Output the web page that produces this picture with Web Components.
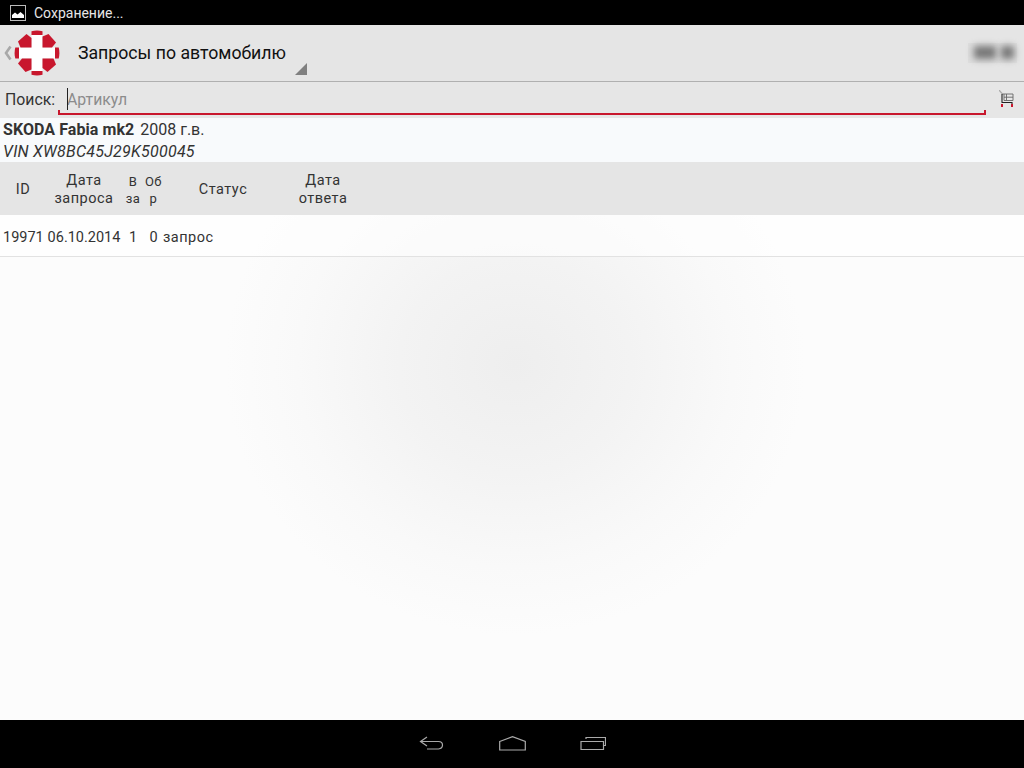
<!DOCTYPE html>
<html>
<head>
<meta charset="utf-8">
<style>
  html, body { margin: 0; height: 100%; }
  body { font-family: Roboto, "Liberation Sans", sans-serif; }
  app-screen { height: 768px; }
</style>
</head>
<body>
<app-screen>
  <status-bar>Сохранение...</status-bar>
  <action-bar>Запросы по автомобилю</action-bar>
  <search-row></search-row>
  <car-info model="SKODA Fabia mk2" year="2008 г.в." vin="VIN XW8BC45J29K500045"></car-info>
  <request-table></request-table>
  <nav-bar></nav-bar>
</app-screen>
<script>
class AppScreen extends HTMLElement {
  constructor() {
    super();
    this.attachShadow({ mode: 'open' });
    this.shadowRoot.innerHTML = `
      <style>
        :host {
          display: flex;
          flex-direction: column;
          width: 1024px;
          overflow: hidden;
          background:
            radial-gradient(ellipse 290px 270px at 515px 365px, #eeeeee 0%, #f3f3f3 40%, #f9f9f9 75%, rgba(252,252,252,0) 100%),
            #fcfcfc;
        }
      </style>
      <slot></slot>`;
  }
}

class StatusBar extends HTMLElement {
  constructor() {
    super();
    this.attachShadow({ mode: 'open' });
    this.shadowRoot.innerHTML = `
      <style>
        :host {
          display: flex;
          align-items: center;
          flex: 0 0 25px;
          padding-left: 10px;
          gap: 8px;
          background: #000;
          color: #e6e6e6;
          font-size: 14px;
        }
        svg { display: block; }
      </style>
      <svg width="16" height="16" viewBox="0 0 16 16">
        <rect x=".5" y=".5" width="15" height="15" fill="none" stroke="#bbb"/>
        <path d="M2 13V10L5 7.5 7.5 9.5 10.5 7 14 10V13Z" fill="#fff"/>
      </svg>
      <slot></slot>`;
  }
}

class ActionBar extends HTMLElement {
  constructor() {
    super();
    this.attachShadow({ mode: 'open' });
    this.shadowRoot.innerHTML = `
      <style>
        :host {
          display: flex;
          align-items: center;
          flex: 0 0 57px;
          box-sizing: border-box;
          border-bottom: 1px solid #b0b0b0;
          background: #e5e5e5;
          color: #111;
          font-size: 17.7px;
        }
        .back { display: block; margin-left: 4px; }
        .logo { display: block; margin-left: 2px; }
        .title { position: relative; margin-left: 18px; padding-right: 21px; line-height: 56px; height: 56px; }
        .title::after {
          content: '';
          position: absolute;
          right: 0;
          bottom: 6px;
          border-style: solid;
          border-width: 0 0 12px 12px;
          border-color: transparent transparent #808080 transparent;
        }
        .account {
          margin-left: auto;
          margin-right: 7px;
          width: 49px;
          height: 20px;
          background: #dedede;
          display: flex;
        }
        .account i { display: block; height: 13px; margin-top: 3px; background: #777; filter: blur(3.5px); }
        .account i:nth-child(1) { width: 22px; margin-left: 6px; }
        .account i:nth-child(2) { width: 13px; margin-left: 5px; }
      </style>
      <svg class="back" width="8" height="16" viewBox="0 0 8 16"><path d="M6.5 1.5 2 8l4.5 6.5" fill="none" stroke="#a8a8a8" stroke-width="2.6"/></svg>
      <svg class="logo" width="46" height="46" viewBox="-23 -23 46 46">
        <defs>
          <g id="part">
            <path d="M-5.5-21.7A22 22 0 0 1 5.5-21.7L5.5-18H-5.5Z" fill="#c8172d"/>
            <path d="M-5.5-5.5V-15L-10.5-19-19-11.5-16.5-5.5Z" fill="#c8172d"/>
          </g>
        </defs>
        <path d="M-5.5-18H5.5V-5.5H18V5.5H5.5V18H-5.5V5.5H-18V-5.5H-5.5Z" fill="#fff"/>
        <use href="#part"/>
        <use href="#part" transform="rotate(90)"/>
        <use href="#part" transform="rotate(180)"/>
        <use href="#part" transform="rotate(270)"/>
      </svg>
      <span class="title"><slot></slot></span>
      <span class="account"><i></i><i></i></span>`;
  }
}

class SearchRow extends HTMLElement {
  constructor() {
    super();
    this.attachShadow({ mode: 'open' });
    this.shadowRoot.innerHTML = `
      <style>
        :host {
          display: flex;
          flex: 0 0 36px;
          box-sizing: border-box;
          padding: 4px 10px 3px 5px;
          background: #e6e6e6;
          color: #333;
          font-size: 15.8px;
          line-height: 27px;
        }
        .field {
          flex: 1;
          position: relative;
          margin-left: 3px;
          padding-left: 9px;
          color: #8c8c8c;
          border-bottom: 2px solid #c8172d;
        }
        .field::before, .field::after {
          content: '';
          position: absolute;
          bottom: -2px;
          width: 2px;
          height: 5px;
          background: #c8172d;
        }
        .field::before { left: 0; }
        .field::after { right: 0; }
        .caret { position: absolute; left: 9px; top: 2px; width: 1px; height: 22px; background: #222; }
        .cart { display: block; margin: 4px 0 0 13px; }
      </style>
      <span>Поиск:</span>
      <div class="field"><span class="caret"></span>Артикул</div>
      <svg class="cart" width="15" height="18" viewBox="0 0 15 18">
        <path d="M0 0 3 3.5" stroke="#aaa" stroke-width="1.2" fill="none"/>
        <path d="M3 4H14V10.5H5V4M7.5 4V10.5M5 7.2H14" stroke="#666" stroke-width=".9" fill="none"/>
        <path d="M3 4V12M2.5 12.5H13V14" stroke="#222" stroke-width="1.1" fill="none"/>
        <rect x="2" y="14" width="2" height="3" fill="#c8172d"/>
        <rect x="12" y="14" width="2" height="3" fill="#c8172d"/>
      </svg>`;
  }
}

class CarInfo extends HTMLElement {
  constructor() {
    super();
    this.attachShadow({ mode: 'open' });
    this.shadowRoot.innerHTML = `
      <style>
        :host {
          display: block;
          flex: 0 0 44px;
          min-height: 0;
          box-sizing: border-box;
          padding: 1px 0 0 3px;
          background: #f8fafc;
          color: #333;
          font-size: 16px;
          line-height: 22px;
        }
        b { margin-right: 2px; letter-spacing: .07px; }
        i { letter-spacing: .25px; }
        div { white-space: nowrap; }
      </style>
      <div><b>${this.getAttribute('model')}</b> ${this.getAttribute('year')}</div>
      <div><i>${this.getAttribute('vin')}</i></div>`;
  }
}

const tableTemplate = document.createElement('template');
tableTemplate.innerHTML = `
  <style>
    :host {
      display: block;
      flex: 1;
      color: #333;
      font-size: 14.5px;
    }
    .row {
      display: grid;
      grid-template-columns: 46px 76px 22px 19px 120px 80px;
      text-align: center;
      align-items: center;
      box-sizing: border-box;
    }
    .head {
      height: 53px;
      padding-top: 3px;
      background: #e5e5e5;
      line-height: 18px;
      letter-spacing: .5px;
    }
    .small { font-size: 13px; line-height: 17px; letter-spacing: .5px; }
    .body {
      height: 42px;
      padding-top: 3px;
      border-bottom: 1px solid #e2e2e2;
      background: rgba(255,255,255,.6);
    }
    .body > span:first-child { text-align: left; padding-left: 3px; }
    .status { text-align: left; letter-spacing: .5px; }
  </style>
  <div class="row head">
    <span>ID</span>
    <span>Дата<br>запроса</span>
    <span class="small">В<br>за</span>
    <span class="small">Об<br>р</span>
    <span>Статус</span>
    <span>Дата<br>ответа</span>
  </div>
  <div class="row body">
    <span>19971</span>
    <span>06.10.2014</span>
    <span>1</span>
    <span>0</span>
    <span class="status">запрос</span>
    <span></span>
  </div>`;

class RequestTable extends HTMLElement {
  constructor() {
    super();
    this.attachShadow({ mode: 'open' });
    this.shadowRoot.appendChild(tableTemplate.content.cloneNode(true));
  }
}

class NavBar extends HTMLElement {
  constructor() {
    super();
    this.attachShadow({ mode: 'open' });
    this.shadowRoot.innerHTML = `
      <style>
        :host {
          display: flex;
          justify-content: center;
          align-items: center;
          flex: 0 0 48px;
          gap: 54px;
          background: #000;
        }
        svg { display: block; fill: none; stroke: #aaa; stroke-width: 1.2; }
      </style>
      <svg width="26" height="16" viewBox="0 0 26 16"><path d="M8 1 1.5 5.5 8 10M2 5.5H19.5Q23.5 5.5 23.5 9T19.5 13H8"/></svg>
      <svg width="27" height="16" viewBox="0 0 27 16"><path d="M.7 5.5 13.5.7 26.3 5.5V14H.7Z"/></svg>
      <svg width="26" height="16" viewBox="0 0 26 16"><path d="M1 5.5H23.5V13.5H1ZM6 3V1.5H25.5V9.5H23.5"/></svg>`;
  }
}

customElements.define('app-screen', AppScreen);
customElements.define('status-bar', StatusBar);
customElements.define('action-bar', ActionBar);
customElements.define('search-row', SearchRow);
customElements.define('car-info', CarInfo);
customElements.define('request-table', RequestTable);
customElements.define('nav-bar', NavBar);
</script>
</body>
</html>
